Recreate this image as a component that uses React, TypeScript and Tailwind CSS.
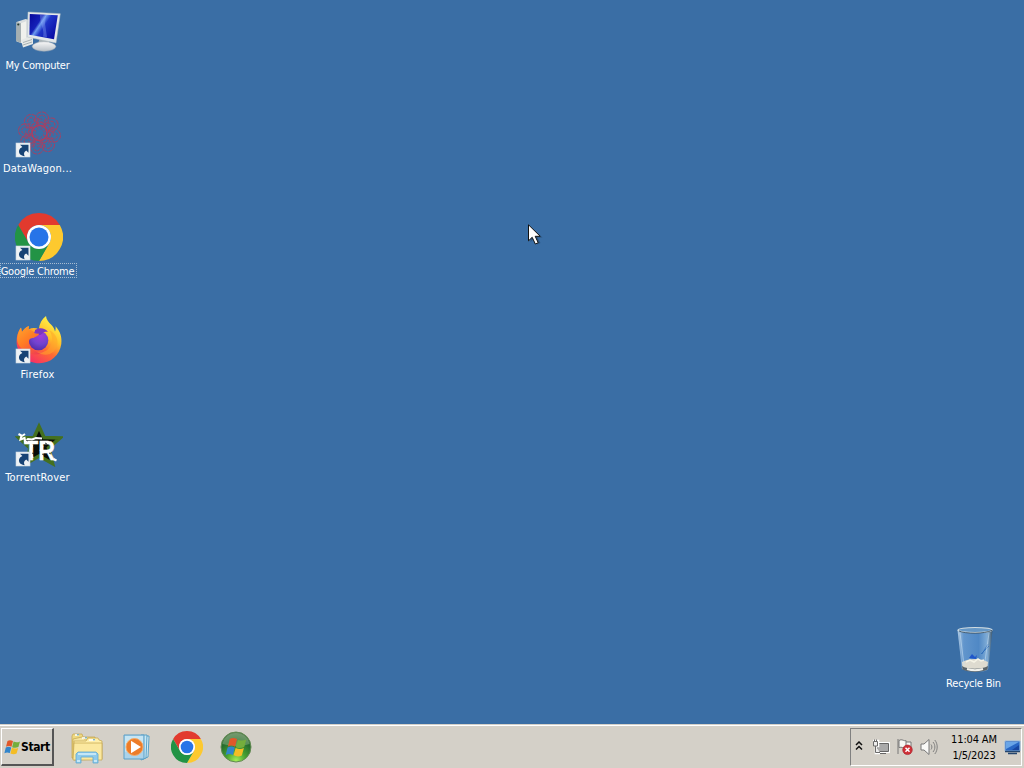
import type { ReactNode } from "react";

const labelFont = "font-['DejaVu_Sans_Condensed','DejaVu_Sans',sans-serif] [font-stretch:condensed]";

function ShortcutBadge() {
  return (
    <g>
      <rect x="1" y="33" width="14" height="14" fill="#eef2f5" stroke="#c9d6e2" strokeWidth=".6" />
      <path d="M5 34.800h8.500v8l-2.300-2.200c-2.400 1.400-2.700 3.200-1.500 5.600-4-.6-6-2.500-5.700-5.200.2-1.800 1.500-3.100 3.400-3.900z" fill="#174375" />
    </g>
  );
}

function ComputerIcon() {
  return (
    <svg width="48" height="48" viewBox="0 0 48 48">
      <defs>
        <linearGradient id="scr" x1="0" y1="0" x2="1" y2=".6">
          <stop offset="0" stopColor="#07079a" />
          <stop offset=".38" stopColor="#1420b8" />
          <stop offset=".46" stopColor="#6d9af0" />
          <stop offset=".6" stopColor="#1e35c8" />
          <stop offset="1" stopColor="#0a10a8" />
        </linearGradient>
        <linearGradient id="stand" x1="0" y1="0" x2="0" y2="1">
          <stop offset="0" stopColor="#f8f8f8" />
          <stop offset="1" stopColor="#b9c0c6" />
        </linearGradient>
      </defs>
      <path d="M1.500 15l9-3 4 1v20l-7 3.500-6-2z" fill="#d9dedf" />
      <path d="M1.500 15l4.500 1.200V36l-5-2z" fill="#a5afb1" />
      <path d="M6 16.200l5-2v19L6 36z" fill="#f0f1ed" />
      <circle cx="3.300" cy="17.500" r="1.100" fill="#263d35" />
      <path d="M6 33l12-5v9L8 40.500z" fill="#e6e9e7" />
      <path d="M8 35.500l9-3M8 38l9-3" stroke="#8f999c" strokeWidth=".7" />
      <path d="M25 31l9 2 1 6H22z" fill="#aab4b8" />
      <ellipse cx="29" cy="39.500" rx="11.800" ry="4.700" fill="url(#stand)" stroke="#a8b1b8" strokeWidth=".5" />
      <path d="M13 5l32.300 1.700L41 36l-28.700-6z" fill="#e3e8ea" stroke="#b2bec5" strokeWidth=".5" />
      <path d="M14.800 7l28 1.300-3.800 24-24.600-4.500z" fill="url(#scr)" />
      <path d="M25 8l6 .2-1 8 2 14-4-.8c2-6-3-12-3-21z" fill="#9bbcff" opacity=".32" />
    </svg>
  );
}

function WagonIcon() {
  const ring = [0, 45, 90, 135, 180, 225, 270, 315];
  return (
    <svg width="48" height="48" viewBox="0 0 48 48">
      <g fill="none" stroke="#c03654" strokeWidth=".9" opacity=".85">
        {ring.map((a) => (
          <g key={a} transform={`rotate(${a + 10} 24.500 23)`}>
            <circle cx="24.500" cy="8.500" r="6.700" strokeDasharray="5 1" />
            <circle cx="24.500" cy="8.500" r="3.500" strokeDasharray="3 1" />
            <circle cx="24.500" cy="14" r="5" strokeDasharray="3 2" strokeWidth=".6" />
          </g>
        ))}
        <circle cx="24.500" cy="23" r="7.500" strokeWidth="1.500" />
        <circle cx="24.500" cy="23" r="10.500" strokeDasharray="4 1" />
      </g>
      <ShortcutBadge />
    </svg>
  );
}

function ChromeIcon({ size, shortcut = false }: { size: number; shortcut?: boolean }) {
  return (
    <svg width={size} height={size} viewBox="0 0 48 48">
      <path d="M3.215 12A24 24 0 0 1 44.785 12H24A12 12 0 0 0 13.608 30z" fill="#e23a2e" />
      <path d="M44.785 12A24 24 0 0 1 24 48L34.392 30A12 12 0 0 0 24 12z" fill="#fdc92f" />
      <path d="M13.608 30A12 12 0 0 0 34.392 30L24 48A24 24 0 0 1 3.215 12z" fill="#229345" />
      <circle cx="24" cy="24" r="12" fill="#fff" />
      <circle cx="24" cy="24" r="9.500" fill="#2774e8" />
      {shortcut && <ShortcutBadge />}
    </svg>
  );
}

function FirefoxIcon() {
  return (
    <svg width="48" height="48" viewBox="0 0 48 48">
      <defs>
        <linearGradient id="fire" x1=".8" y1=".1" x2=".25" y2=".95">
          <stop offset="0" stopColor="#fff047" />
          <stop offset=".32" stopColor="#ffc12b" />
          <stop offset=".6" stopColor="#ff6b32" />
          <stop offset="1" stopColor="#f52d68" />
        </linearGradient>
        <linearGradient id="fox" x1="0" y1="0" x2=".8" y2="1">
          <stop offset="0" stopColor="#ffa82c" />
          <stop offset=".5" stopColor="#ff7a25" />
          <stop offset="1" stopColor="#ef3c53" />
        </linearGradient>
        <radialGradient id="globe" cx=".6" cy=".25" r=".8">
          <stop offset="0" stopColor="#a33bd8" />
          <stop offset=".55" stopColor="#7143cf" />
          <stop offset="1" stopColor="#512ba5" />
        </radialGradient>
      </defs>
      <path d="M31 0c.3 3.500 2.600 6.200 5.500 9 1.800 1.800 3 4.200 3.500 6.400.7-1.700.8-3.600.5-5.200 4.800 5 6.700 11.200 5.800 17.800-1.500 11.400-10.700 19.200-22 19.200C11.800 47.200 2 38 1.600 26.200c-.2-5.800 1.500-10.800 4.400-14.600L6.800 16c2-3 4.200-4.700 7-6l-.4 3.500c3.700-2 7.300-1.800 10.300-.1C24.500 7.500 27 3 31 0z" fill="url(#fire)" />
      <circle cx="23.500" cy="24.500" r="9.800" fill="url(#globe)" />
      <path d="M20 14c5-2.800 9.900-1.900 13 1.900-2.500-.5-4.200 0-5.300 1.300-2.700 3-5.500 2-7.700-1.200z" fill="#7b36c0" />
      <path d="M2.500 20c1-5 3-8 3.600-8.300L7 16.200c2-2.700 3.800-4.700 6.800-6.200l-.1 3.700c3 .2 5 1.600 6.300 3.700l4 .4c.5 1.200-3.300 3.200-5.500 4.200-4 0-5 2-4.500 6 1.300 6.700 9 9.300 15 7.400-3.300 3.500-12 4.400-18.500.3C4.500 32 1 26.500 2.500 20z" fill="url(#fox)" />
      <path d="M34 14c3.700 5 3.900 11.800.8 16.800-2.700 5-8.700 6.500-13.300 5 9.700 6.800 20.500 1.500 21-9.500.2-4.800-3.800-10.300-8.500-12.300z" fill="#ffa629" opacity=".55" />
      <ShortcutBadge />
    </svg>
  );
}

function RoverIcon() {
  return (
    <svg width="48" height="48" viewBox="0 0 48 48">
      <path d="M24 7.500l5 11 16 .5-11.500 10 4 15.500-13.500-7.500-12 7 3-15L4 19l15-.5z" fill="#080c08" stroke="#44701f" strokeWidth="3.600" />
      <text x="9" y="41" fontSize="27" fill="#fff" stroke="#fff" strokeWidth=".3" fontFamily="Liberation Sans, sans-serif" fontWeight="700" textLength="31" lengthAdjust="spacingAndGlyphs">TR</text>
      <path d="M3.500 15l3 1.500-1 4 4-1.500.5 3.500 3-2.500 4 .5 4-1.500 6 .5M7 17l3-2m7 11-1.500 6 2 7m10-12-2 5m13 8 3 1.500" fill="none" stroke="#fff" strokeWidth="2.100" />
      <path d="M11 21l2 1m5 5 2 1m-3 6 2 1m10-8 2 1m-4 7 2 1m5-2 2 1m-6-11 2 1" stroke="#11191b" strokeWidth=".8" />
      <ShortcutBadge />
    </svg>
  );
}

function BinIcon() {
  return (
    <svg width="48" height="48" viewBox="0 0 48 48">
      <defs>
        <linearGradient id="bin">
          <stop offset="0" stopColor="#bed5ea" stopOpacity=".9" />
          <stop offset=".18" stopColor="#6b9fd6" stopOpacity=".8" />
          <stop offset=".6" stopColor="#5791d0" stopOpacity=".75" />
          <stop offset=".85" stopColor="#8db8df" stopOpacity=".85" />
          <stop offset="1" stopColor="#3b5366" />
        </linearGradient>
      </defs>
      <path d="M6.500 5h35l-4.300 39c-2.500 4-23 4-26.400-.8z" fill="url(#bin)" />
      <path d="M11 37c7-4 19-4 26 0l-1 7c-5 3-19 3-24.500 0z" fill="#dedbd0" />
      <path d="M11 41c5 3.500 20 3.500 26 0l-.5 3.500c-5 3.200-20 3.200-25 0z" fill="#59646b" />
      <path d="M16 44c5 1.500 11 1.500 16 0" fill="none" stroke="#f1f1ec" strokeWidth="2" />
      <path d="M15 37l4-2 4 2 4-3 3 2 3-1" fill="none" stroke="#f5f3e6" strokeWidth="1.500" />
      <path d="M18 33l3-4 3 3 2-2-1 4z" fill="#1e56ca" />
      <path d="M30 29l8-8m-7 8 6-10" stroke="#2869b9" strokeWidth=".7" />
      <path d="M9 8l4 32M38 8l-4 28" stroke="#c8e0f2" strokeWidth=".8" opacity=".7" />
      <ellipse cx="24" cy="5" rx="17" ry="2.500" fill="#6597c6" stroke="#d1dce1" strokeWidth="1.200" />
      <path d="M8 6c6 3 26 3 33-.7" fill="none" stroke="#3c5366" strokeWidth=".9" />
    </svg>
  );
}

function DesktopItem({ label, children, focused = false, tracking = "" }: { label: string; children: ReactNode; focused?: boolean; tracking?: string }) {
  return (
    <div className="flex h-[103px] w-[77px] flex-col items-start">
      <div className="ml-[15px] h-12 w-12">{children}</div>
      <div
        className={`mt-[2px] flex h-[15px] w-[77px] items-center justify-center whitespace-nowrap border border-dotted pr-[2px] pt-[2px] text-[11px] leading-[13px] text-white ${labelFont} ${tracking} ${focused ? "border-[#a9bdd2]" : "border-transparent"}`}
      >
        {label}
      </div>
    </div>
  );
}

function WindowsFlag({ x = 0, y = 0, scale = 1 }: { x?: number; y?: number; scale?: number }) {
  return (
    <g transform={`translate(${x} ${y}) scale(${scale})`}>
      <path d="M2.500 1.500C4.500.3 6 .6 8 1.600L6.500 7.300C4.500 6.300 3 6.200 1 7.300z" fill="#e0582a" />
      <path d="M8.600 2c2 1 4.200 1 6.400-.1L13.400 7.600c-2 1-4.300 1-6.300.1z" fill="#74ae3c" />
      <path d="M.8 7.900c2-1 3.600-.9 5.500.1L4.800 13.600c-2-1-3.400-.9-5.400.1z" fill="#3285cb" />
      <path d="M6.900 8.300c2 .9 4.200 1 6.300.1l-1.600 5.600c-2 1-4.200.9-6.200-.1z" fill="#f4bd25" />
    </g>
  );
}

function ExplorerIcon() {
  return (
    <svg width="34" height="32" viewBox="0 0 34 32">
      <g stroke="#c3a34c" strokeWidth=".7">
        <path d="M2 26V4l1-2h9l1 3h12v19z" fill="#eed982" />
        <path d="M3 27V7l9-2 2 2h13v19z" fill="#f4e4a0" />
        <path d="M4 28V9h12l2-3h10l1 2 3 1v18z" fill="#ffefaa" />
        <path d="M3 28l1-17h28v17z" fill="#fbe89f" />
      </g>
      <path d="M5 3h4m3 3h5m2 2h6" stroke="#fff" strokeWidth="1.700" />
      <path d="M7 2.800h2m6 3h2m6 2h2" stroke="#4c9cb5" strokeWidth="1" />
      <path d="M6 31V22l2-2h18l2 2v9h-5v-6H11v6z" fill="#8ecaeb" stroke="#5fa8d2" strokeWidth=".8" />
      <path d="M8 22h18M7 29h3m14 0h3" stroke="#d8f1fa" strokeWidth="1.300" />
    </svg>
  );
}

function MediaIcon() {
  return (
    <svg width="28" height="27" viewBox="0 0 28 27">
      <path d="M20 2h6v1l-1 20-5 2z" fill="#d9edf5" stroke="#4d9bc3" strokeWidth=".9" />
      <path d="M18 1h6l-1 23-5 2z" fill="#c9e7f3" stroke="#4d9bc3" strokeWidth=".9" />
      <path d="M1 1h20v24H1z" fill="#abd3ea" stroke="#5b9fc7" />
      <path d="M2 2h18v8L2 18z" fill="#c6e5f3" />
      <circle cx="11.500" cy="13" r="8.500" fill="#ed7c28" stroke="#f5aa67" />
      <path d="M8 6.800v12.400L18 13z" fill="#fff" />
    </svg>
  );
}

function OrbIcon() {
  return (
    <svg width="32" height="32" viewBox="0 0 32 32">
      <defs>
        <radialGradient id="orb" cx=".5" cy=".95" r=".95">
          <stop offset="0" stopColor="#a5ef57" />
          <stop offset=".35" stopColor="#48a132" />
          <stop offset=".7" stopColor="#246b2d" />
          <stop offset="1" stopColor="#537c50" />
        </radialGradient>
      </defs>
      <circle cx="16" cy="16" r="15" fill="url(#orb)" stroke="#628a52" />
      <path d="M2.500 13C4 6 9 2 16 2s12 4 13.500 11C22 16 10 15 2.500 13z" fill="#e0edcd" opacity=".28" />
      <WindowsFlag x={6.500} y={6} scale={1.320} />
    </svg>
  );
}

function TrayIcons() {
  return (
    <>
      <svg width="8" height="10" viewBox="0 0 8 10" className="mb-[3px] ml-[4px]">
        <path d="M1 4l3-3 3 3M1 8.500l3-3 3 3" fill="none" stroke="#111" strokeWidth="1.500" />
      </svg>
      <svg width="18" height="17" viewBox="0 0 18 17" className="ml-[9px]">
        <path d="M5.500 4.500h11v8h-11z" fill="#b5b5b1" stroke="#fff" strokeWidth="2.800" />
        <path d="M5.500 4.500h11v8h-11zM8 14.500h6" fill="#aaa" stroke="#656565" />
        <path d="M1 2h5v5H4v7h4" fill="none" stroke="#fff" strokeWidth="2.600" />
        <path d="M1.500 2.500h4V7h-4zM3.500 7v6.500H8M2.500.5v2m2-2v2" fill="#eee" stroke="#6b6b6b" />
      </svg>
      <svg width="18" height="18" viewBox="0 0 18 18" className="ml-[6px]">
        <path d="M2 1v15M3 2.500c3-2 5 1 7 0v7c-3 1-4-1-7 0zM10 4h5v6h-5" fill="#f7f7f4" stroke="#777" strokeWidth="1" />
        <circle cx="11.500" cy="11.800" r="4.800" fill="#cf3037" stroke="#a31e28" strokeWidth=".6" />
        <path d="M9.500 9.800l4 4m0-4l-4 4" stroke="#fff" strokeWidth="1.500" />
      </svg>
      <svg width="18" height="18" viewBox="0 0 18 18" className="ml-[6px]">
        <path d="M1 6h3l5-4.500v15L4 12H1z" fill="#f9f9f7" stroke="#777" />
        <path d="M11 6.500c1.200 1.600 1.200 3.500 0 5M13 4c2.500 3 2.500 7 0 10m1.800-12c3.200 4 3.200 10 0 14" fill="none" stroke="#777" strokeWidth=".9" />
      </svg>
    </>
  );
}

function Cursor() {
  return (
    <svg width="16" height="23" viewBox="0 0 16 23" className="absolute left-[528px] top-[224px]">
      <path d="M2.500 3v15l4-3.500 3 6 3-1.500-3-5.500h5z" fill="#17334e" opacity=".4" />
      <path d="M.5.800v16l3.700-3.500 3.100 6.700 2.900-1.300-3-6.400h5z" fill="#fff" stroke="#111" />
    </svg>
  );
}

export default function App() {
  return (
    <div className="relative flex h-[768px] w-[1024px] flex-col overflow-hidden bg-[#3a6ea5]">
      <main className="flex min-h-0 flex-1 justify-between">
        <div className="flex flex-col pt-[7px]">
          <DesktopItem label="My Computer" tracking="tracking-[-0.25px]"><ComputerIcon /></DesktopItem>
          <DesktopItem label="DataWagon..." tracking="tracking-[0.2px]"><WagonIcon /></DesktopItem>
          <DesktopItem label="Google Chrome" focused tracking="tracking-[-0.25px]"><ChromeIcon size={48} shortcut /></DesktopItem>
          <DesktopItem label="Firefox" tracking="tracking-[0.2px]"><FirefoxIcon /></DesktopItem>
          <DesktopItem label="TorrentRover" tracking="tracking-[0.15px]"><RoverIcon /></DesktopItem>
        </div>
        <div className="flex flex-col justify-end pr-[11px]">
          <div className="-mb-[4px]"><DesktopItem label="Recycle Bin" tracking="tracking-[-0.2px]"><BinIcon /></DesktopItem></div>
        </div>
      </main>
      <footer className="flex h-11 shrink-0 items-start border-t border-[#d4d0c8] bg-[#d4d0c8] shadow-[inset_0_1px_0_#fff]">
        <button className={`ml-[1px] mt-[3px] flex h-[38px] w-[53px] items-center border-b-2 border-l border-r-2 border-t border-b-[#555] border-l-white border-r-[#555] border-t-white pl-[2px] text-[12px] font-bold text-black ${labelFont}`}>
          <svg width="17" height="16" viewBox="-1 0 17 15" className="shrink-0"><WindowsFlag /></svg>
          <span className="tracking-[-0.4px]">Start</span>
        </button>
        <nav className="flex h-[43px] items-center pl-[16px] pt-[2px]">
          <ExplorerIcon />
          <div className="ml-[19px]"><MediaIcon /></div>
          <div className="-mt-[2px] ml-[20px]"><ChromeIcon size={32} /></div>
          <div className="-mt-[2px] ml-[17px]"><OrbIcon /></div>
        </nav>
        <div className="ml-auto mr-[2px] mt-[3px] flex h-[38px] w-[172px] items-center border border-b-white border-l-[#808080] border-r-white border-t-[#808080]">
          <TrayIcons />
          <div className={`ml-[10px] w-[52px] whitespace-nowrap pt-[2px] text-center text-[11px] leading-4 tracking-[-0.15px] text-black ${labelFont}`}>
            <div>11:04 AM</div>
            <div>1/5/2023</div>
          </div>
          <svg width="17" height="15" viewBox="0 0 17 15" className="ml-auto shrink-0">
            <path d="M1 1h15v10H1z" fill="#2866c4" stroke="#93b8dc" />
            <path d="M2 2h13L2 9z" fill="#69a5e7" />
            <path d="M8 10l7-5v5z" fill="#1745a0" />
            <path d="M1 11.500h15M4 13.500h9" stroke="#24466e" strokeWidth="1.400" />
          </svg>
        </div>
      </footer>
      <Cursor />
    </div>
  );
}
